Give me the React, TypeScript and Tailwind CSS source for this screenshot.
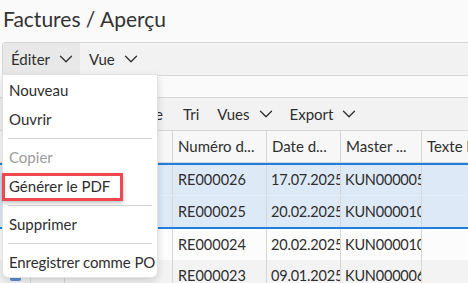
import { ChevronDown } from "lucide-react";

const rows = [
  { no: "RE000026", date: "17.07.2025", master: "KUN000005", sel: true, bg: "bg-[#dde9f7]" },
  { no: "RE000025", date: "20.02.2025", master: "KUN000010", sel: true, bg: "bg-[#dde9f7]" },
  { no: "RE000024", date: "20.02.2025", master: "KUN000010", sel: false, bg: "bg-[#fcfcfc]" },
  { no: "RE000023", date: "09.01.2025", master: "KUN000006", sel: false, bg: "bg-[#f3f3f3]" },
];

const cols = "grid grid-cols-[31px_34px_108px_94px_74px_81px_60px]";

function Chevron() {
  return <ChevronDown size={22} strokeWidth={1.4} className="-mx-[5px]" />;
}

function Menu() {
  return (
    <div className="absolute left-[3px] top-[75px] w-[154px] h-[202px] bg-white rounded-b-[5px] shadow-[0_0_0_1px_#e2e2e2,0_3px_8px_rgba(0,0,0,0.18)] text-[15px] text-[#2e2e2e] whitespace-nowrap">
      <div className="h-[30px] flex items-center pl-[6px]">Nouveau</div>
      <div className="h-[29px] flex items-center pl-[6px]">Ouvrir</div>
      <div className="mx-[5px] my-[4px] border-t border-[#d4d4d4]" />
      <div className="h-[29px] flex items-center pl-[6px] text-[#9b9b9b]">Copier</div>
      <div className="h-[29px] flex items-center">
        <div className="ml-[-1px] h-[28px] w-[121px] border-[3px] border-[#f0484e] flex items-center pl-[4px] shadow-[0_2px_4px_rgba(0,0,0,0.25)]">
          Générer le PDF
        </div>
      </div>
      <div className="mx-[5px] my-[4px] border-t border-[#d4d4d4]" />
      <div className="h-[29px] flex items-center pl-[6px]">Supprimer</div>
      <div className="mx-[5px] my-[4px] border-t border-[#d4d4d4]" />
      <div className="h-[29px] flex items-center pl-[6px] tracking-[-0.1px]">Enregistrer comme PO</div>
    </div>
  );
}

export default function App() {
  return (
    <div
      className="relative w-[468px] h-[283px] overflow-hidden bg-[#fafafa] text-[#2e2e2e]"
      style={{ fontFamily: "Lato, 'Noto Sans', sans-serif" }}
    >
      <h1 className="h-[42px] pl-[3px] pt-[5px] text-[21px] leading-[28px] text-[#333]">Factures / Aperçu</h1>

      {/* main toolbar */}
      <div className="ml-[2px] h-[34px] flex items-stretch bg-[#f2f2f2] border-y border-l border-[#d6d6d6] rounded-tl-[4px] text-[15px]">
        <div className="w-[77px] flex items-center pl-[8px] gap-[10px] bg-[#e8e8e8]">
          Éditer <Chevron />
        </div>
        <div className="flex items-center pl-[9px] gap-[10px]">
          Vue <Chevron />
        </div>
      </div>

      <div className="h-[21px] bg-[#fafafa]" />

      {/* table toolbar */}
      <div className="h-[34px] flex items-center bg-[#f2f2f2] border-y border-[#d6d6d6] text-[15px] pl-[129px]">
        <span>Filtre</span>
        <span className="ml-[20px]">Tri</span>
        <span className="ml-[18px] flex items-center gap-[10px]">
          Vues <Chevron />
        </span>
        <span className="ml-[18px] flex items-center gap-[10px]">
          Export <Chevron />
        </span>
      </div>

      {/* table */}
      <div className="text-[15px] whitespace-nowrap">
        <div className={`${cols} h-[32px] bg-[#f7f7f7] border-b border-[#d6d6d6]`}>
          <div className="border-r border-[#d6d6d6]" />
          <div className="border-r border-[#d6d6d6]" />
          <div className="border-r border-[#d6d6d6]" />
          <div className="border-r border-[#d6d6d6] pl-[5px] flex items-center overflow-hidden">Numéro d...</div>
          <div className="border-r border-[#d6d6d6] pl-[5px] flex items-center overflow-hidden">Date d...</div>
          <div className="border-r border-[#d6d6d6] pl-[5px] flex items-center overflow-hidden">Master ...</div>
          <div className="pl-[5px] flex items-center overflow-hidden">Texte libre</div>
        </div>
        <div className="border-y-2 border-[#1e7fe0]">
          {rows.filter((r) => r.sel).map((r, i) => (
            <Row key={r.no} r={r} last={i === 1} />
          ))}
        </div>
        {rows.filter((r) => !r.sel).map((r) => (
          <Row key={r.no} r={r} last />
        ))}
      </div>

      <Menu />
    </div>
  );
}

function Row({ r, last }: { r: (typeof rows)[number]; last: boolean }) {
  return (
    <div className={`${cols} h-[31px] ${r.bg} ${last ? "" : "border-b border-[#e6eef8]"} text-[14.5px]`}>
      <div className="border-r border-[#d6d6d6] flex items-center justify-center">
        <div className={`w-[11px] h-[11px] rounded-[2px] ${r.sel ? "bg-[#1e7fe0]" : "bg-[#5b8fd4]"}`} />
      </div>
      <div className="border-r border-[#d6d6d6]" />
      <div className="border-r border-[#d6d6d6]" />
      <div className="border-r border-[#d6d6d6] pl-[5px] flex items-center overflow-hidden">{r.no}</div>
      <div className="border-r border-[#d6d6d6] pl-[4px] flex items-center overflow-hidden">
        <span className="tracking-[-0.2px]">{r.date}</span>
      </div>
      <div className="border-r border-[#d6d6d6] pl-[4px] flex items-center overflow-hidden">
        <span className="tracking-[-0.2px]">{r.master}</span>
      </div>
      <div />
    </div>
  );
}
